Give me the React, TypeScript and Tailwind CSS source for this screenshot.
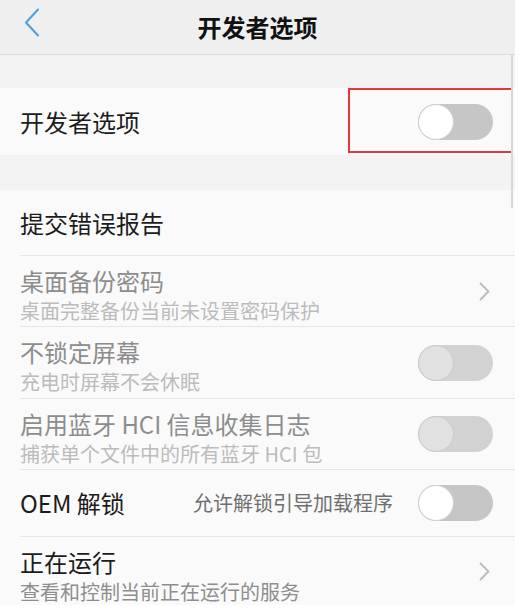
type SwitchProps = { disabled?: boolean };

function Switch({ disabled }: SwitchProps) {
  return (
    <div
      className={`w-[75px] h-[36px] rounded-full flex items-center shrink-0 ${
        disabled ? "bg-[#d2d2d2]" : "bg-[#c6c6c6]"
      }`}
    >
      <div
        className={`w-[36px] h-[36px] rounded-full border ${
          disabled ? "bg-[#e1e1e1] border-[#cacaca]" : "bg-white border-[#cfcfcf]"
        }`}
      />
    </div>
  );
}

function Arrow() {
  return (
    <svg viewBox="0 0 11 19" className="w-[11px] h-[19px] mr-[3px] shrink-0" fill="none">
      <polyline points="1.5,1.5 9.5,9.5 1.5,17.5" stroke="#bdbdbd" strokeWidth="1.8" strokeLinecap="round" strokeLinejoin="round" />
    </svg>
  );
}

interface RowProps {
  title: string;
  sub?: string;
  disabled?: boolean;
  height: string;
  right?: React.ReactNode;
  divider?: boolean;
}

function Row({ title, sub, disabled, height, right, divider = true }: RowProps) {
  return (
    <div className={`pl-5 bg-[#fafafa] ${height}`}>
      <div
        className={`h-full flex items-center justify-between pr-[22px] ${
          divider ? "border-b border-[#e6e6e6]" : ""
        }`}
      >
        <div className={`flex flex-col ${sub ? "self-start pt-[10px]" : ""}`}>
          <span
            className={`text-[24px] leading-[30px] ${
              disabled ? "text-[#8d8d8d]" : "text-[#1c1c1c]"
            }`}
          >
            {title}
          </span>
          {sub && (
            <span
              className={`text-[20px] leading-[30px] ${
                disabled ? "text-[#bcbcbc]" : "text-[#8e8e8e]"
              }`}
            >
              {sub}
            </span>
          )}
        </div>
        {right}
      </div>
    </div>
  );
}

export default function App() {
  return (
    <div
      className="relative w-[520px] h-[608px] bg-white overflow-hidden flex"
      style={{ fontFamily: '"Noto Sans CJK SC", "Noto Sans", sans-serif' }}
    >
      <div className="w-[515px] flex flex-col">
        <div className="h-[55px] bg-[#efefef] border-b border-[#dadada] relative flex items-center justify-center">
          <svg viewBox="0 0 16 29" className="absolute left-[24px] top-[8px] w-[16px] h-[29px]" fill="none">
            <polyline points="14,1.5 2,14.5 14,27.5" stroke="#4a9fe0" strokeWidth="2" strokeLinecap="round" strokeLinejoin="round" />
          </svg>
          <span className="text-[24px] font-bold text-[#111]">开发者选项</span>
        </div>

        <div className="h-[33px] bg-[#f3f3f3]" />

        <div className="relative h-[67px] bg-[#fafafa] pl-5 pr-[22px] flex items-center justify-between">
          <span className="text-[24px] text-[#1c1c1c]">开发者选项</span>
          <Switch />
          <div className="absolute left-[348px] top-0 w-[165px] h-[65px] border-2 border-[#e2383a]" />
        </div>

        <div className="h-[35px] bg-[#f3f3f3]" />

        <Row title="提交错误报告" height="h-[66px]" />
        <Row
          title="桌面备份密码"
          sub="桌面完整备份当前未设置密码保护"
          disabled
          height="h-[71px]"
          right={<Arrow />}
        />
        <Row
          title="不锁定屏幕"
          sub="充电时屏幕不会休眠"
          disabled
          height="h-[72px]"
          right={<Switch disabled />}
        />
        <Row
          title="启用蓝牙 HCI 信息收集日志"
          sub="捕获单个文件中的所有蓝牙 HCI 包"
          disabled
          height="h-[71px]"
          right={<Switch disabled />}
        />
        <div className="pl-5 bg-[#fafafa] h-[67px]">
          <div className="h-full flex items-center pr-[22px] border-b border-[#e6e6e6]">
            <span className="text-[24px] text-[#1c1c1c] w-[173px]">OEM 解锁</span>
            <span className="text-[20px] text-[#6f6f6f] flex-1">允许解锁引导加载程序</span>
            <Switch />
          </div>
        </div>
        <Row
          title="正在运行"
          sub="查看和控制当前正在运行的服务"
          height="h-[68px]"
          right={<Arrow />}
          divider={false}
        />
        <div className="flex-1 bg-white" />
      </div>
      <div className="w-[5px] bg-white" />
      <div className="absolute left-[511px] top-[55px] w-[2px] h-[153px] bg-[#d8d8d8]" />
    </div>
  );
}
